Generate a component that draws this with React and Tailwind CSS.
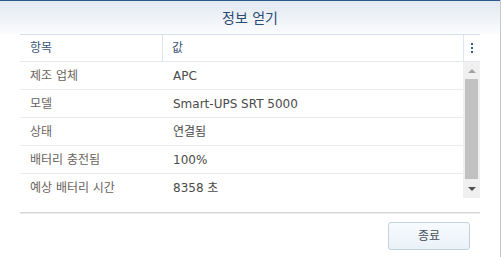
import React from "react";

const rows = [
  ["제조 업체", "APC"],
  ["모델", "Smart-UPS SRT 5000"],
  ["상태", "연결됨"],
  ["배터리 충전됨", "100%"],
  ["예상 배터리 시간", "8358 초"],
];

const font = { fontFamily: '"DejaVu Sans", "Noto Sans CJK KR", sans-serif' };

export default function App() {
  return (
    <div className="flex w-[501px] h-[257px] bg-white overflow-hidden" style={font}>
      <div className="flex flex-col w-[500px] h-full">
        <div className="h-[1px] bg-[#2b5a8f]" />
        <div className="h-[33px] flex items-center justify-center bg-gradient-to-b from-[#e2e8f1] to-[#fbfcfd]">
          <span className="text-[14px] text-[#2a4a70] leading-none pt-[1px]">정보 얻기</span>
        </div>
        <div className="mx-[20px] flex flex-col">
          <div className="flex h-[28px] border-t border-b border-t-[#d5dfeb] border-b-[#e3e8ee] text-[12px] text-[#3a5473]">
            <div className="w-[143px] pl-[10px] flex items-center border-r border-[#dfe6ee]">항목</div>
            <div className="flex-1 pl-[9px] flex items-center border-r border-[#dfe6ee]">값</div>
            <div className="w-[16px] flex flex-col items-center justify-center gap-[2px] pr-[1px]">
              <span className="w-[2px] h-[2px] bg-[#2b5a8f]" />
              <span className="w-[2px] h-[2px] bg-[#2b5a8f]" />
              <span className="w-[2px] h-[2px] bg-[#2b5a8f]" />
            </div>
          </div>
          <div className="flex h-[136px]">
            <div className="flex-1 overflow-hidden">
              {rows.map(([k, v]) => (
                <div key={k} className="flex h-[28px] border-b border-[#ebebeb] text-[12px]">
                  <div className="w-[143px] pl-[10px] flex items-center text-[#6a625c]">{k}</div>
                  <div className="flex-1 pl-[10px] flex items-center text-[#4a4a4a]">{v}</div>
                </div>
              ))}
            </div>
            <div className="w-[17px] bg-[#f0f0f0] flex flex-col items-center">
              <div className="h-[17px] flex items-center justify-center">
                <svg width="8" height="4" viewBox="0 0 8 4"><path d="M0 4 L4 0 L8 4 Z" fill="#a3a3a3" /></svg>
              </div>
              <div className="w-[13px] h-[100px] bg-[#c1c1c1]" />
              <div className="flex-1 flex items-center justify-center">
                <svg width="8" height="4" viewBox="0 0 8 4"><path d="M0 0 L8 0 L4 4 Z" fill="#505050" /></svg>
              </div>
            </div>
          </div>
          <div className="h-[14px]" />
          <div className="h-[1px] bg-[#d6d6d6]" />
          <div className="h-[1px] bg-[#ececec]" />
        </div>
        <div className="flex justify-end pr-[30px] pt-[8px]">
          <button className="w-[82px] h-[28px] rounded-[3px] border border-[#c4d1de] bg-gradient-to-b from-[#f8fbfe] to-[#e9f1f9] text-[12px] text-[#46505a]">
            종료
          </button>
        </div>
      </div>
      <div className="w-[1px] h-full bg-[#c8c8c8]" />
    </div>
  );
}
